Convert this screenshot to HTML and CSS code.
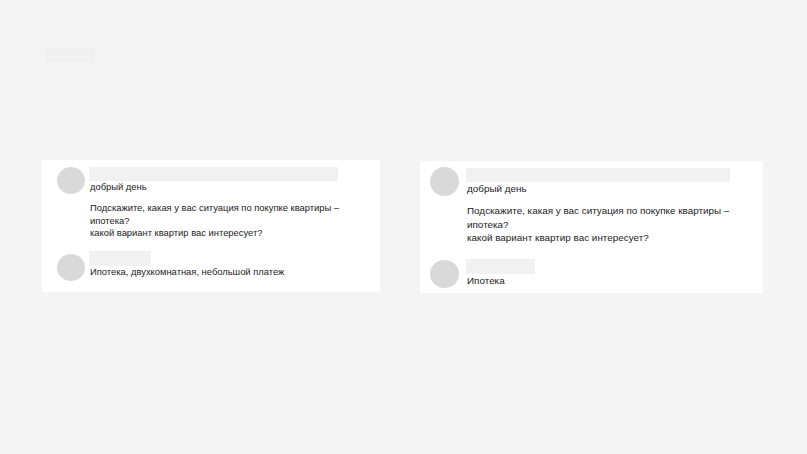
FILE: index.html
```html
<!doctype html>
<html lang="ru">
  <head>
    <meta charset="UTF-8" />
    <meta name="viewport" content="width=device-width, initial-scale=1.0" />
    <title>Диалоги</title>
    <link rel="stylesheet" href="styles.css">
  </head>

  <body>
    <div class="page">
      <div class="title-stub"></div>

      <div class="cards">
        <!-- first dialog -->
        <section class="chat chat-a">
          <div class="msg">
            <div class="avatar"></div>
            <div class="msg-body">
              <div class="name-stub name-long"></div>
              <p>добрый день</p>
              <p>
                Подскажите, какая у вас ситуация по покупке квартиры –<br />
                ипотека?<br />
                какой вариант квартир вас интересует?
              </p>
            </div>
          </div>
          <div class="msg reply">
            <div class="avatar"></div>
            <div class="msg-body">
              <div class="name-stub name-short"></div>
              <p>Ипотека, двухкомнатная, небольшой платеж</p>
            </div>
          </div>
        </section>

        <!-- second dialog -->
        <section class="chat chat-b">
          <div class="msg">
            <div class="avatar"></div>
            <div class="msg-body">
              <div class="name-stub name-long"></div>
              <p>добрый день</p>
              <p>
                Подскажите, какая у вас ситуация по покупке квартиры –<br />
                ипотека?<br />
                какой вариант квартир вас интересует?
              </p>
            </div>
          </div>
          <div class="msg reply">
            <div class="avatar"></div>
            <div class="msg-body">
              <div class="name-stub name-short"></div>
              <p>Ипотека</p>
            </div>
          </div>
        </section>
      </div>
    </div>
  </body>
</html>
```

FILE: styles.css
```css
html {
  background: #f4f4f4;
  font-family: "Liberation Sans", Arial, sans-serif;
  color: #222;
}
body {
  margin: 0;
}
p {
  margin: 0;
}
.page {
  padding: 47px 0 0 42px;
}
.title-stub {
  width: 50px;
  height: 16px;
  margin-left: 3px;
  background: #f0f0f0;
  border-radius: 2px;
}
.cards {
  display: flex;
  align-items: flex-start;
  gap: 40px;
  margin-top: 97px;
}
.chat {
  background: #fff;
  box-sizing: border-box;
}
.msg {
  display: flex;
  align-items: flex-start;
}
.avatar {
  flex: none;
  border-radius: 50%;
  background: #d9d9d9;
}
.name-stub {
  background: #f1f1f1;
}
.msg-body p {
  padding-left: 1px;
}
.msg-body p + p {
  margin-top: 8px;
}

/* left dialog */
.chat-a {
  width: 338px;
  height: 132px;
  padding: 7px 0 0 15px;
  font-size: 9.4px;
  line-height: 12.5px;
}
.chat-a .avatar {
  width: 28px;
  height: 27px;
  margin-right: 4px;
}
.chat-a .name-long {
  width: 249px;
  height: 14px;
}
.chat-a .name-short {
  width: 62px;
  height: 15px;
}
.chat-a .msg-body p + p {
  margin-top: 8.5px;
}
.chat-a .reply {
  margin-top: 11px;
}
.chat-a .reply .avatar {
  margin-top: 3px;
}

/* right dialog */
.chat-b {
  width: 343px;
  height: 132px;
  margin-top: 1px;
  padding: 6px 0 0 10px;
  font-size: 9.9px;
  line-height: 13.5px;
}
.chat-b .avatar {
  width: 29px;
  height: 29px;
  margin-right: 7px;
}
.chat-b .name-long {
  width: 264px;
  height: 14px;
  margin-top: 1px;
}
.chat-b .name-short {
  width: 69px;
  height: 15px;
}
.chat-b .msg-body p + p {
  margin-top: 8.5px;
}
.chat-b .reply {
  margin-top: 14px;
}
.chat-b .reply .avatar {
  margin-top: 1px;
  height: 28px;
}
```
